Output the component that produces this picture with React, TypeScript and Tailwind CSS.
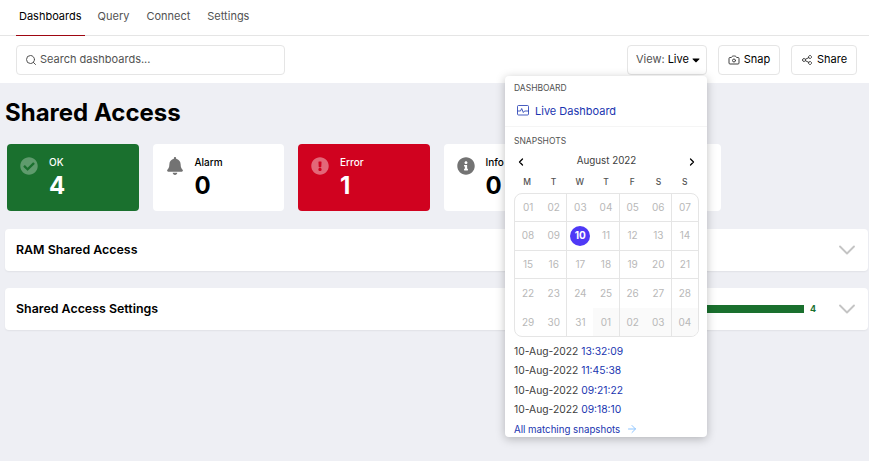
import * as React from 'react';
import { ArrowRight, Camera, ChevronDown, ChevronLeft, ChevronRight, Search } from 'lucide-react';
import { FaBell, FaCaretDown, FaCheckCircle, FaExclamationCircle, FaInfoCircle } from 'react-icons/fa';
import { HiOutlineShare } from 'react-icons/hi';

const days = ['M', 'T', 'W', 'T', 'F', 'S', 'S'];
const dates = [
  '01', '02', '03', '04', '05', '06', '07',
  '08', '09', '10', '11', '12', '13', '14',
  '15', '16', '17', '18', '19', '20', '21',
  '22', '23', '24', '25', '26', '27', '28',
  '29', '30', '31', '01', '02', '03', '04',
];
const snapshots = [
  ['10-Aug-2022', '13:32:09'],
  ['10-Aug-2022', '11:45:38'],
  ['10-Aug-2022', '09:21:22'],
  ['10-Aug-2022', '09:18:10'],
];

function Card({ label, value, icon, tone }: { label: string; value: string; icon: React.ReactNode; tone: string }) {
  return (
    <div className={`flex h-[67px] w-[131.5px] shrink-0 gap-[11px] rounded pl-[13px] pt-[12px] ${tone}`}>
      <div className="w-[18px] pt-[1px] text-[18px]">{icon}</div>
      <div className="flex flex-col">
        <span className="text-[10px] font-medium leading-[12px]">{label}</span>
        <span className="mt-[4px] text-2xl font-bold leading-[28px]">{value}</span>
      </div>
    </div>
  );
}

function Panel({ title, children }: { title: string; children?: React.ReactNode }) {
  return (
    <div className="flex h-[42px] items-center rounded bg-white pl-[11px] pr-[7px] shadow-[0_1px_2px_rgba(0,0,0,0.06)]">
      <span className="flex-1 text-[12.4px] font-semibold text-black">{title}</span>
      {children}
      <ChevronDown className="ml-[17px] h-7 w-7 text-[#c4c4c4]" strokeWidth={1.6} />
    </div>
  );
}

function Calendar() {
  return (
    <div className="-mr-[1px] grid grid-cols-7 overflow-hidden rounded-lg border border-neutral-200 text-[10px] text-[#b8b8b8]">
      {dates.map((d, i) => {
        const col = i % 7;
        const row = Math.floor(i / 7);
        const isRight = col === 1 || col === 3 || col === 5;
        const selected = i === 9;
        const outside = i > 30;
        return (
          <div
            key={i}
            className={`flex h-[28.6px] items-center justify-center border-neutral-200 ${isRight ? 'border-r' : ''} ${row < 3 ? 'border-b' : ''} ${outside ? 'bg-neutral-50' : ''}`}
          >
            {selected ? (
              <span className="flex h-5 w-5 items-center justify-center rounded-full bg-indigo-600 font-bold text-white">{d}</span>
            ) : (
              d
            )}
          </div>
        );
      })}
    </div>
  );
}

function ViewMenu() {
  return (
    <div className="absolute left-[505px] top-[76px] z-10 h-[361px] w-[202px] rounded bg-white shadow-[0_2px_10px_rgba(0,0,0,0.25)]">
      <div className="border-b border-neutral-100 px-[9px] pb-[8px] pt-[7px]">
        <div className="text-[8.5px] uppercase leading-[11px] text-neutral-600">Dashboard</div>
        <div className="mt-[10px] flex h-[14px] items-center gap-[4px] pl-[3px] text-[11px] text-[#1a35b0]">
          <svg viewBox="0 0 14 12" className="h-3 w-3.5" fill="none" stroke="currentColor" strokeWidth="0.8">
            <rect x="0.5" y="0.5" width="11" height="9.5" rx="1" />
            <path d="M0.5 6h3l1.2-2.5 1.6 4 1.2-1.5h4.5" />
          </svg>
          <span>Live Dashboard</span>
        </div>
      </div>
      <div className="px-[9px] pt-[9px]">
        <div className="text-[8.5px] uppercase leading-[11px] text-neutral-600">Snapshots</div>
        <div className="mt-[7.5px] flex h-[14px] items-center justify-between pl-[1px] text-[9.8px] text-neutral-700">
          <ChevronLeft className="h-3 w-3 text-black" strokeWidth={2.5} />
          <span>August 2022</span>
          <ChevronRight className="h-3 w-3 text-black" strokeWidth={2.5} />
        </div>
        <div className="mt-[7px] grid grid-cols-7 text-center text-[8.5px] font-medium leading-[12px] text-neutral-600">
          {days.map((d, i) => (
            <span key={i}>{d}</span>
          ))}
        </div>
        <div className="mt-[5px]">
          <Calendar />
        </div>
        <div className="mt-[4.5px] flex flex-col text-[10.3px] leading-[19.5px] text-neutral-700">
          {snapshots.map(([date, time], i) => (
            <div key={i}>
              {date} <span className="text-[#1a35b0]">{time}</span>
            </div>
          ))}
        </div>
        <div className="flex items-center gap-[4px] text-[9.7px] leading-[19px] text-[#1a35b0]">
          All matching snapshots
          <ArrowRight className="ml-[2px] h-3 w-3 text-blue-300" />
        </div>
      </div>
    </div>
  );
}

export default function App() {
  return (
    <div className="relative h-[461px] w-[869px] overflow-hidden bg-[#eeeff4] font-['Inter',sans-serif]">
      <nav className="flex h-9 border-b border-neutral-200 bg-white pl-4 text-[11px] text-neutral-600">
        <a className="relative h-9 border-b border-red-800 px-[3px] pt-[8px] text-black">Dashboards</a>
        <a className="ml-[10px] px-[3px] pt-[8px]">Query</a>
        <a className="ml-[11px] px-[3px] pt-[8px]">Connect</a>
        <a className="ml-[11px] px-[3px] pt-[8px]">Settings</a>
      </nav>
      <div className="flex h-[47px] items-start bg-white pl-4 pr-3 pt-[9px] text-[11px]">
        <div className="flex h-[30px] w-[269px] items-center gap-[3px] rounded border border-neutral-200 pb-[1px] pl-[8px] text-neutral-600">
          <Search className="h-3 w-3" />
          <span>Search dashboards...</span>
        </div>
        <div className="ml-auto flex gap-[11px] text-black">
          <button className="flex h-[30px] w-20 items-center gap-[3px] rounded border border-neutral-200 pb-[1px] pl-[8px]">
            <span className="text-neutral-600">View:</span> Live <FaCaretDown className="-ml-[2px] h-3 w-3" />
          </button>
          <button className="flex h-[30px] w-[62px] items-center justify-center gap-[4px] rounded border border-neutral-200 pb-[1px]">
            <Camera className="h-3 w-3 text-neutral-700" /> Snap
          </button>
          <button className="flex h-[30px] w-[66px] items-center justify-center gap-[4px] rounded border border-neutral-200 pb-[1px]">
            <HiOutlineShare className="h-3 w-3 text-neutral-700" /> Share
          </button>
        </div>
      </div>
      <main className="pl-[5px] pr-[1px] pt-[15px]">
        <h1 className="text-2xl font-bold leading-[30px] text-black">Shared Access</h1>
        <div className="mt-4 flex gap-[14px] pl-[2px]">
          <Card label="OK" value="4" tone="bg-[#1a702e] text-white" icon={<FaCheckCircle className="text-white/30" />} />
          <Card label="Alarm" value="0" tone="bg-white text-black" icon={<FaBell className="text-neutral-500" />} />
          <Card label="Error" value="1" tone="bg-[#d0021f] text-white" icon={<FaExclamationCircle className="text-white/40" />} />
          <Card label="Info" value="0" tone="bg-white text-black" icon={<FaInfoCircle className="text-neutral-500" />} />
          <Card label="" value="" tone="bg-white text-black" icon={null} />
        </div>
        <div className="mt-[18px] flex flex-col gap-[17px]">
          <Panel title="RAM Shared Access" />
          <Panel title="Shared Access Settings">
            <div className="h-2 w-[120px] bg-[#1a702e]" />
            <span className="ml-[6px] w-[6px] text-[9px] font-bold text-[#1a702e]">4</span>
          </Panel>
        </div>
      </main>
      <ViewMenu />
    </div>
  );
}
